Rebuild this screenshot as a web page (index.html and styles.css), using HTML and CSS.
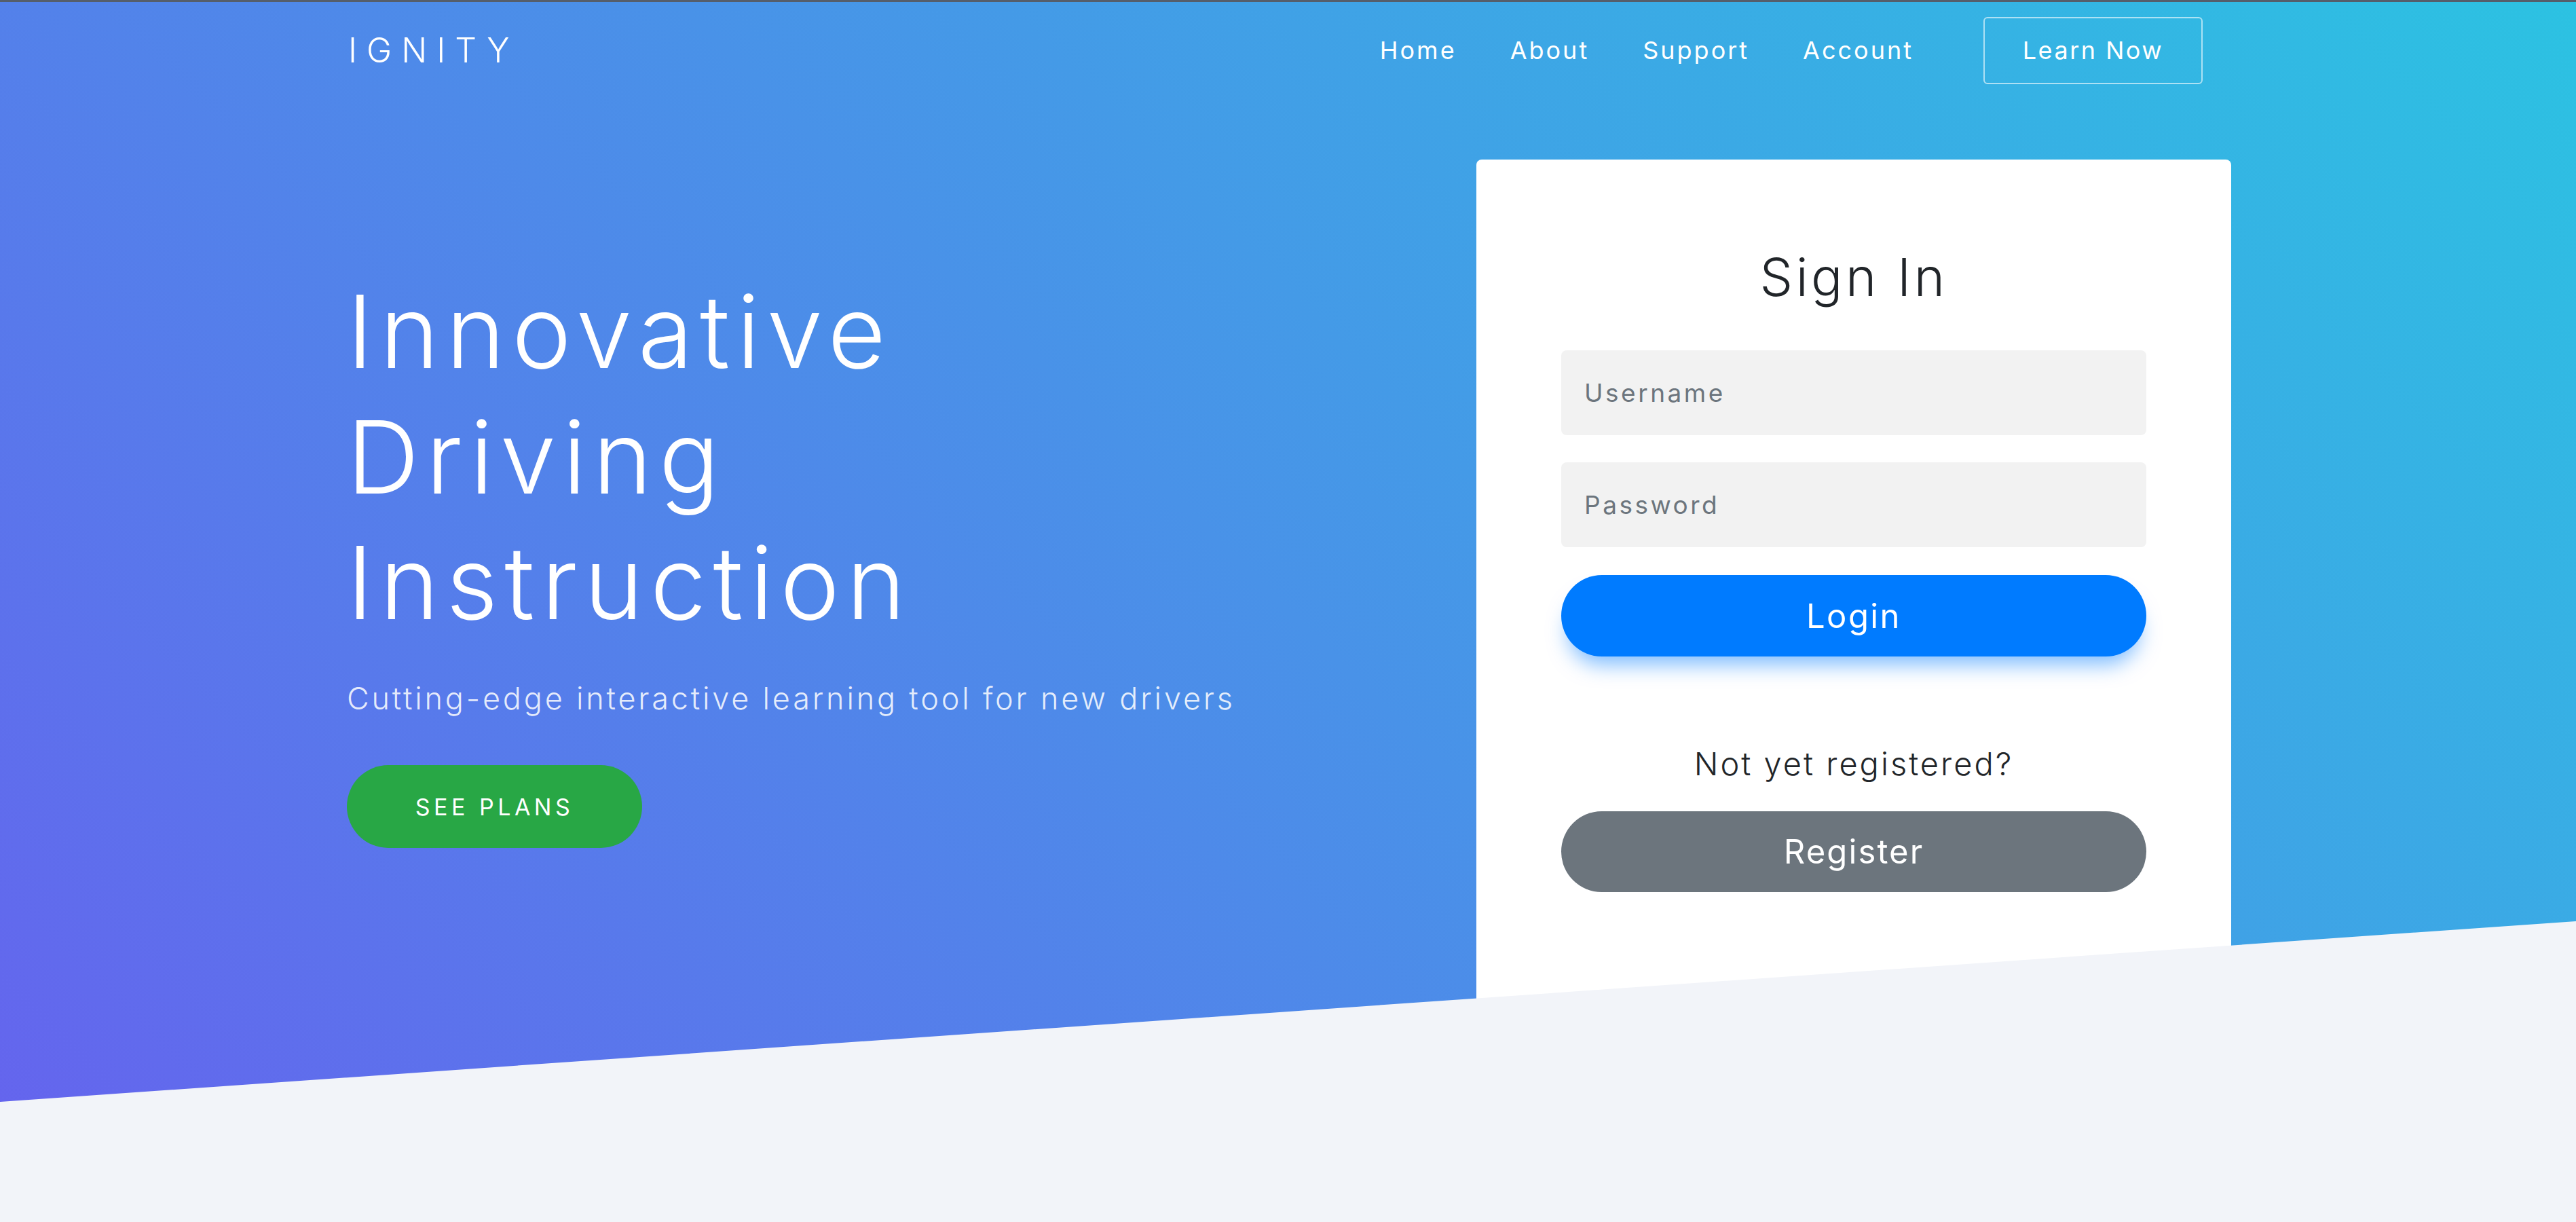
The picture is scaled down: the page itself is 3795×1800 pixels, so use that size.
FILE: index.html
```html
<!DOCTYPE html>
<html lang="en">
<head>
<meta charset="utf-8">
<title>Ignity</title>
<link rel="stylesheet" href="styles.css">
</head>
<body>
<div class="topline"></div>
<div class="hero">
  <header class="nav">
    <div class="logo">IGNITY</div>
    <nav class="links">
      <a class="link" href="#">Home</a>
      <a class="link" href="#">About</a>
      <a class="link" href="#">Support</a>
      <a class="link" href="#">Account</a>
      <a class="learn" href="#">Learn Now</a>
    </nav>
  </header>
  <main class="row">
    <section class="intro">
      <h1 class="headline">Innovative<br>Driving<br>Instruction</h1>
      <p class="sub">Cutting-edge interactive learning tool for new drivers</p>
      <a class="plans" href="#">SEE PLANS</a>
    </section>
    <section class="card">
      <h2 class="card-title">Sign In</h2>
      <input class="field" type="text" placeholder="Username">
      <input class="field" type="password" placeholder="Password">
      <button class="btn btn-login">Login</button>
      <p class="note">Not yet registered?</p>
      <button class="btn btn-register">Register</button>
    </section>
  </main>
  <div class="slant"></div>
</div>
</body>
</html>
```
FILE: styles.css
```css
* { box-sizing: border-box; }
html, body { margin: 0; padding: 0; }
body {
  width: 3795px;
  height: 1800px;
  overflow: hidden;
  background: #f2f4f9;
  font-family: "Inter", "Open Sans", sans-serif;
  color: #fff;
}
.topline { height: 3px; background: #555e6b; }
.hero {
  position: relative;
  height: 1797px;
  background: linear-gradient(45deg, #6662ee 0%, #2cc2e2 100%);
}
.nav {
  height: 142px;
  display: flex;
  align-items: center;
  justify-content: space-between;
  padding: 0 550px 0 513px;
}
.logo {
  font-size: 50px;
  font-weight: 300;
  letter-spacing: 14px;
  line-height: 1;
}
.links { display: flex; align-items: center; }
.link {
  color: #fff;
  text-decoration: none;
  font-size: 36px;
  font-weight: 400;
  letter-spacing: 3px;
  padding: 0 39px 0 40px;
}
.learn {
  margin-left: 64px;
  color: #fff;
  text-decoration: none;
  font-size: 36px;
  font-weight: 400;
  letter-spacing: 2.5px;
  height: 99px;
  width: 323px;
  display: flex;
  align-items: center;
  justify-content: center;
  border: 2px solid rgba(255,255,255,0.6);
  border-radius: 6px;
}
.row {
  display: flex;
  justify-content: space-between;
  align-items: flex-start;
  padding: 90px 508px 0 511px;
}
.intro { padding-top: 161px; }
.headline {
  margin: 0;
  font-size: 148px;
  font-weight: 300;
  line-height: 185px;
  letter-spacing: 10px;
}
.sub {
  margin: 48px 0 0;
  font-size: 45px;
  line-height: 60px;
  font-weight: 300;
  letter-spacing: 3.8px;
  color: rgba(255,255,255,0.85);
}
.plans {
  margin-top: 68px;
  display: flex;
  align-items: center;
  justify-content: center;
  width: 435px;
  height: 122px;
  border-radius: 61px;
  background: #28a745;
  color: #fff;
  text-decoration: none;
  font-size: 34px;
  font-weight: 400;
  letter-spacing: 5.5px;
}
.card {
  width: 1112px;
  background: #fff;
  border-radius: 8px;
  padding: 123px 125px 200px;
  display: flex;
  flex-direction: column;
}
.card-title {
  margin: 0 0 58px;
  text-align: center;
  font-size: 77px;
  line-height: 100px;
  font-weight: 300;
  letter-spacing: 4.5px;
  color: #212529;
}
.field {
  height: 125px;
  border: 0;
  border-radius: 8px;
  background: #f2f2f2;
  padding: 0 34px;
  font-family: inherit;
  font-size: 37px;
  font-weight: 400;
  letter-spacing: 3.5px;
  color: #495057;
  outline: none;
}
.field + .field { margin-top: 40px; }
.field::placeholder { color: #6c757d; }
.btn {
  border: 0;
  border-radius: 60px;
  color: #fff;
  font-family: inherit;
  font-size: 49px;
  font-weight: 400;
  cursor: pointer;
}
.btn-login {
  margin-top: 41px;
  height: 120px;
  letter-spacing: 2.4px;
  background: #007bff;
  box-shadow: 0 22px 30px -10px rgba(0,123,255,0.5);
}
.note {
  margin: 128px 0 0;
  text-align: center;
  font-size: 47px;
  line-height: 60px;
  font-weight: 300;
  letter-spacing: 3px;
  color: #212529;
}
.btn-register {
  margin-top: 40px;
  height: 119px;
  letter-spacing: 2.1px;
  background: #6c757d;
}
.slant {
  position: absolute;
  left: 0;
  right: 0;
  top: 1354px;
  bottom: 0;
  background: #f2f4f9;
  clip-path: polygon(0 266px, 100% 0, 100% 100%, 0 100%);
}
```
